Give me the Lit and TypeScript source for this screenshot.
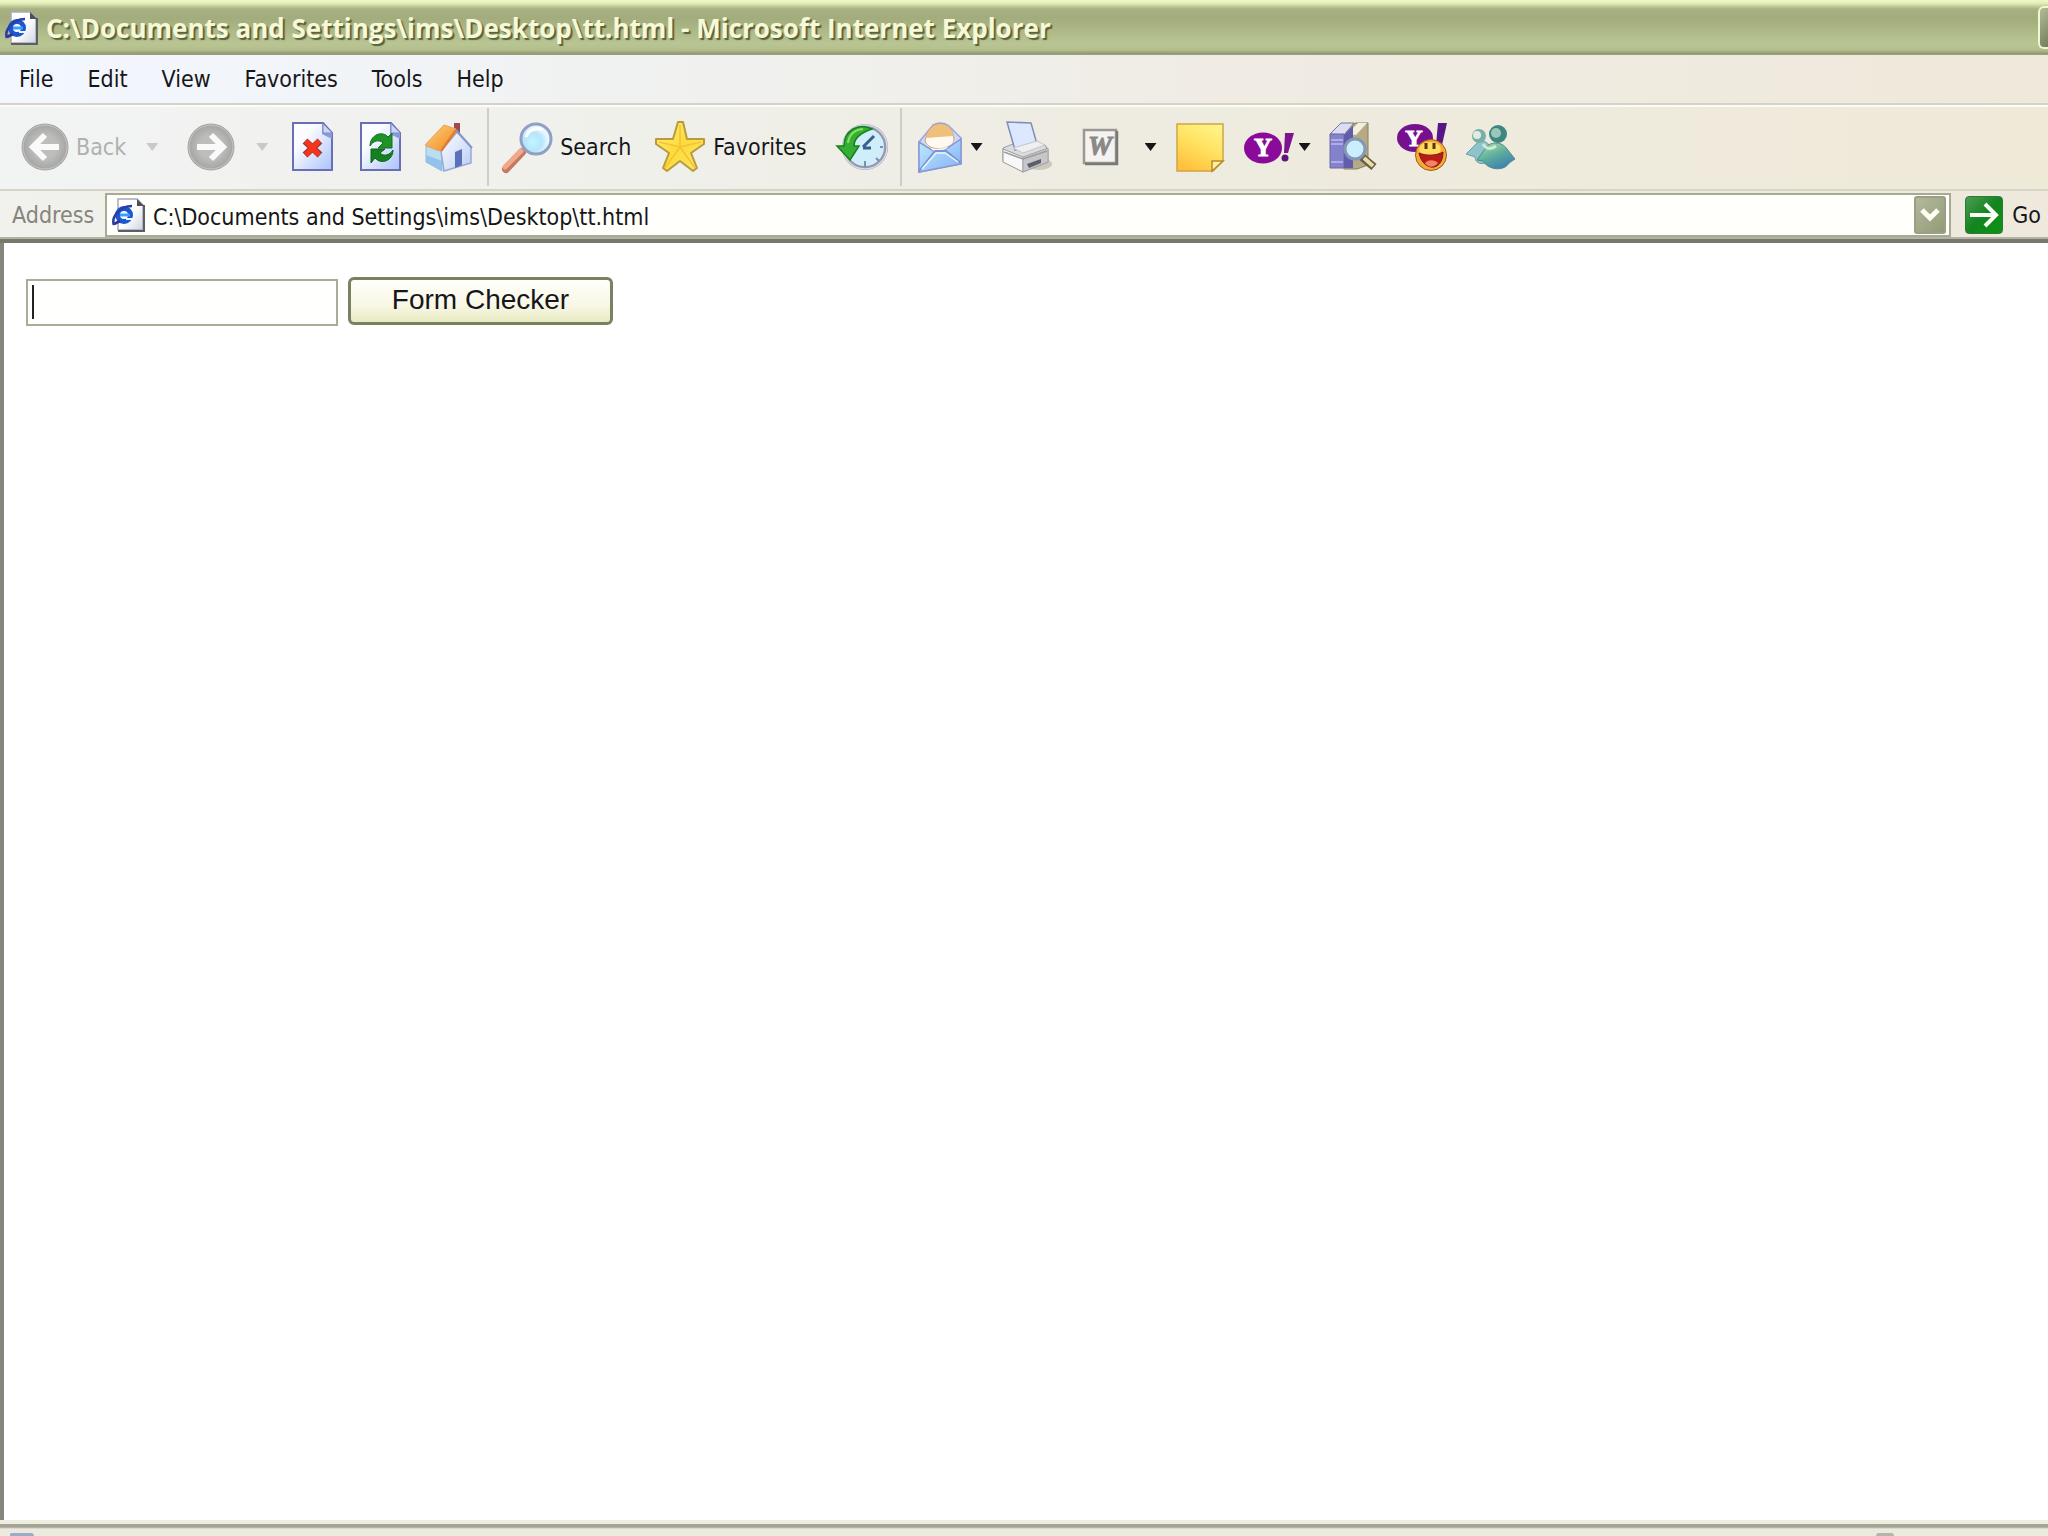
import { LitElement, html, css, svg } from "lit";
import { customElement, property } from "lit/decorators.js";

const pageShape = (id: string) => svg`
  <defs><linearGradient id=${id} x1="0" y1="0" x2="1" y2="1"><stop offset=".3" stop-color="#fbfcff"/><stop offset="1" stop-color="#a9c2fb"/></linearGradient></defs>
  <path d="M5 2H35L44 12V49H5Z" fill="url(#${id})" stroke="#6a6fb4" stroke-width="2"/>
  <path d="M34 2L44 12V18L34 13Z" fill="#8a9bd8"/><path d="M35 3V12H44" fill="#c9d6fa" stroke="#7f8cc8"/>`;

const icons: Record<string, unknown> = {
  back: svg`<defs><radialGradient id="g"><stop offset=".5" stop-color="#bdbdbb"/><stop offset="1" stop-color="#a2a2a0"/></radialGradient></defs>
    <circle cx="25" cy="26" r="23.500" fill="url(#g)"/><circle cx="25" cy="26" r="22" fill="none" stroke="#c6c6c4" stroke-width="1"/>
    <path d="M39 26H14M25 14L13 26L25 38" fill="none" stroke="#fafafa" stroke-width="6"/>`,
  forward: svg`<defs><radialGradient id="g"><stop offset=".5" stop-color="#bdbdbb"/><stop offset="1" stop-color="#a2a2a0"/></radialGradient></defs>
    <circle cx="25" cy="26" r="23.500" fill="url(#g)"/><circle cx="25" cy="26" r="22" fill="none" stroke="#c6c6c4" stroke-width="1"/>
    <path d="M11 26H36M25 14L37 26L25 38" fill="none" stroke="#fafafa" stroke-width="6"/>`,
  stop: svg`${pageShape("p")}<path d="M17 20L32 34M32 20L17 34" stroke="#a03a34" stroke-width="7"/><path d="M18 20L31 34M31 20L18 34" stroke="#f8331a" stroke-width="5"/>`,
  refresh: svg`${pageShape("p")}
    <path d="M14 25C14 14 26 9 32 16L36 12V27H22L27 22C23 18 17 20 14 25Z" fill="#1f9328" stroke="#0e7020"/>
    <path d="M37 29C37 40 25 44 19 37L15 42V28H29L24 32C28 36 34 34 37 29Z" fill="#14801f" stroke="#0b6418"/>`,
  home: svg`<defs><linearGradient id="r" x1="0" y1="0" x2="1" y2="1"><stop stop-color="#ffd079"/><stop offset="1" stop-color="#ef8a22"/></linearGradient>
      <linearGradient id="w" x1="0" y1="0" x2="1" y2="1"><stop stop-color="#fff"/><stop offset="1" stop-color="#b7cdf6"/></linearGradient></defs>
    <path d="M2 25L18 30V50L2 41Z" fill="#b9def0" stroke="#9db6dc"/><path d="M2 34L18 40V50L2 41Z" fill="#93c3ea"/>
    <path d="M17 30L33 11L47 26V42L20 50Z" fill="url(#w)" stroke="#9aa8d2" stroke-width="1.500"/>
    <path d="M30 2H36V13L30 10Z" fill="#a0484a"/>
    <path d="M20 4L32 8L15 30L1 24Z" fill="url(#r)" stroke="#e8a350"/><path d="M32 9L17 30" stroke="#e57b29" stroke-width="2.500"/>
    <path d="M32 9L48 27" stroke="#8796c8" stroke-width="2"/><path d="M31 31L38 28V44L31 47Z" fill="#5a70b8"/>`,
  search: svg`<defs><radialGradient id="l" cx=".4" cy=".6"><stop stop-color="#c2f7ff"/><stop offset=".6" stop-color="#b5e5fb"/><stop offset="1" stop-color="#e8f7ff"/></radialGradient></defs>
    <path d="M20 31L4 48" stroke="#c47a60" stroke-width="8" stroke-linecap="round"/><path d="M19 30L3 46" stroke="#f0a98a" stroke-width="5" stroke-linecap="round"/>
    <circle cx="34" cy="18" r="15" fill="url(#l)" stroke="#8fa0c4" stroke-width="3"/><path d="M24 16C27 8 35 6 40 9" stroke="#fff" stroke-width="3" fill="none"/>`,
  star: svg`<defs><linearGradient id="s" x1="0" y1="0" x2="1" y2="1"><stop stop-color="#fff184"/><stop offset=".5" stop-color="#fddb3b"/><stop offset="1" stop-color="#f8e66c"/></linearGradient></defs>
    <path d="M23 1H28L32 18L49 18V23L36 32L42 47L38 50L25 40L12 50L8 47L14 32L1 23V18L18 18Z" fill="url(#s)" stroke="#b99a3c" stroke-width="2" stroke-linejoin="round"/>
    <path d="M25 4V26L10 47M25 26L46 21M25 26L40 47M25 26L4 21" stroke="#f5c233" stroke-width="1.500" fill="none"/>`,
  history: svg`<circle cx="28" cy="26" r="21" fill="#cfeefa" stroke="#9498b0" stroke-width="4"/><circle cx="28" cy="26" r="22" fill="none" stroke="#d8dae6" stroke-width="1.500"/>
    <path d="M26 26L37 15M26 27H34" stroke="#3b5d92" stroke-width="3"/><path d="M28 40V46M43 26H46M39 37L42 40" stroke="#7b8fb4" stroke-width="2"/>
    <path d="M35 8C21 1 7 10 7 25H0L13 39L22 25H17C17 16 26 11 35 8Z" fill="#35ae31" stroke="#15811f" stroke-width="1.500"/><path d="M11 22C12 14 17 9 26 8" stroke="#8add6a" stroke-width="2" fill="none"/>`,
  mail: svg`<defs><linearGradient id="m" x1="0" y1="0" x2="1" y2="1"><stop stop-color="#bcecff"/><stop offset="1" stop-color="#86b0f3"/></linearGradient></defs>
    <path d="M4 21L18 4C24 1 30 2 34 5L46 17V43L4 51Z" fill="#cfd9f8" stroke="#9aa4d6" stroke-width="1.500"/>
    <path d="M10 20C12 9 18 3 25 3C33 3 38 9 39 18C38 29 14 32 10 20Z" fill="#fffaf0" stroke="#c79a78"/><path d="M11 17C13 8 19 3 25 3C33 3 37 9 38 15Z" fill="#efbf7c"/>
    <path d="M4 21L20 31L31 28L46 18V43L4 51Z" fill="url(#m)" stroke="#8a96d4" stroke-width="1.500"/>
    <path d="M10 22C14 31 36 29 39 19L31 28L20 31Z" fill="#fffaf0"/>
    <path d="M4 50L20 30H31L46 42" fill="none" stroke="#7f92d3" stroke-width="2"/><path d="M7 48L21 32H30L43 41" fill="none" stroke="#e4f8ff" stroke-width="1.500"/>`,
  print: svg`<ellipse cx="38" cy="43" rx="13" ry="6" fill="#ccc8be"/><path d="M2 27L17 21L44 24L47 29V41L22 51L2 40Z" fill="#dcdcdc" stroke="#9a9a9c"/>
    <path d="M6 1L30 2L36 23L14 29Z" fill="#dbe8ff" stroke="#7f90b6" stroke-width="1.500"/><path d="M12 27L36 20L44 24L22 32Z" fill="#eeeff2" stroke="#c4c4c6"/>
    <path d="M2 28L22 36V51L2 41Z" fill="#f8f8f8" stroke="#9a9a9c"/><path d="M22 36L47 27V41L22 51Z" fill="#c6c7ca" stroke="#a4a4a8"/>
    <path d="M26 43L40 38V42L28 47Z" fill="#5d5f68"/><path d="M3 31L22 38L46 30" stroke="#9d9da0" fill="none" stroke-width="1.500"/>`,
  word: svg`<rect x="9" y="9" width="32" height="33" fill="#f4f3ef" stroke="#9a9893" stroke-width="2.500"/><path d="M10 43H42V10" stroke="#7b7975" stroke-width="2.500" fill="none"/>
    <text x="25" y="34" text-anchor="middle" font-family="Liberation Serif, serif" font-weight="bold" font-style="italic" font-size="27" fill="#8a8987" stroke="#8a8987">W</text>`,
  note: svg`<defs><linearGradient id="n" x1=".8" y1="0" x2=".3" y2="1"><stop stop-color="#fff489"/><stop offset=".5" stop-color="#ffe15f"/><stop offset="1" stop-color="#ffc03d"/></linearGradient></defs>
    <path d="M2 3H48V40L38 50H2Z" fill="url(#n)" stroke="#cfa545" stroke-width="1.500"/><path d="M37 50V40H48Z" fill="#fff2a0" stroke="#b98b2c" stroke-width="1.500"/>`,
  yahoo: svg`<ellipse cx="20" cy="27" rx="19" ry="15.500" fill="#8a0b9a"/><text x="20" y="35" text-anchor="middle" font-family="Liberation Serif, serif" font-weight="bold" font-size="25" fill="#fff" stroke="#fff">Y</text>
    <path d="M42 12H51L45 32H41Z" fill="#7d1391"/><circle cx="42" cy="37" r="3.500" fill="#5d1778"/>`,
  books: svg`<path d="M1 13L12 2H25L15 14Z" fill="#dcdcf2" stroke="#76769a"/><path d="M15 14L26 2H39V44L28 48H15Z" fill="#b5aa83" stroke="#85805e"/><path d="M18 13L29 2H38L27 14Z" fill="#f3efdc"/>
    <path d="M1 13H15V47H1Z" fill="#8582cc" stroke="#6b68a5"/><path d="M2 19H14M2 23H14M2 41H14" stroke="#aeabe8" stroke-width="2"/><path d="M15 14L24 5V47H15Z" fill="#615cae"/>
    <path d="M33 36L45 46" stroke="#675e45" stroke-width="8"/><path d="M35 37L44 45" stroke="#eadca8" stroke-width="4"/>
    <circle cx="26" cy="28" r="10" fill="#cbeefc" stroke="#8497b5" stroke-width="3"/>`,
  messenger: svg`<ellipse cx="18" cy="17" rx="18" ry="14" fill="#76108f"/><text x="17" y="25" text-anchor="middle" font-family="Liberation Serif, serif" font-weight="bold" font-size="24" fill="#fff" stroke="#fff">Y</text>
    <path d="M41 2H50L45 24H39Z" fill="#571585"/><circle cx="34" cy="34" r="15.500" fill="#f9a936" stroke="#a4581c"/><ellipse cx="33" cy="28" rx="11" ry="7" fill="#ffdb60"/>
    <path d="M29 22V28M37 22V28" stroke="#59350e" stroke-width="3"/><path d="M22 32C29 35 39 35 46 31C46 51 26 51 22 32Z" fill="#ba1d17" stroke="#742010"/><path d="M28 42C32 38 38 39 41 42C37 47 31 47 28 42Z" fill="#f68268"/>`,
  people: svg`<defs><linearGradient id="a" x1=".2" y1="0" x2=".8" y2="1"><stop stop-color="#a5dba6"/><stop offset=".5" stop-color="#5aaa9c"/><stop offset="1" stop-color="#3c77ba"/></linearGradient></defs>
    <path d="M1 33L11 23C14 19 21 19 24 24L25 41C18 44 10 43 10 36Z" fill="#8fc3cc" stroke="#6ba3aa"/><circle cx="14" cy="15" r="7" fill="#7aaca8"/><circle cx="12" cy="14" r="4" fill="#deede2"/>
    <path d="M12 39L20 28C24 20 37 20 42 28L50 38L44 42C40 50 24 50 18 40Z" fill="url(#a)" stroke="#4c8c91"/><circle cx="33" cy="13" r="9" fill="#3f8581"/><circle cx="31" cy="12" r="5" fill="#98c8b8"/>
    <path d="M18 23C21 28 26 29 31 25" stroke="#cdebd2" stroke-width="3" fill="none"/>`,
};

@customElement("tool-icon")
class ToolIcon extends LitElement {
  @property() name = "stop";
  static styles = css`:host { display: block; flex: none; } svg { display: block; width: 50px; height: 52px; overflow: visible; }`;
  render() { return html`<svg viewBox="0 0 50 52" aria-hidden="true">${icons[this.name]}</svg>`; }
}

@customElement("page-icon")
class PageIcon extends LitElement {
  static styles = css`:host { display: block; flex: none; } svg { display: block; width: 34px; height: 34px; }`;
  render() {
    return html`<svg viewBox="0 0 34 34" aria-hidden="true">
      <defs><linearGradient id="d" x1="0" y1="0" x2="1" y2="1"><stop offset=".5" stop-color="#fff"/><stop offset="1" stop-color="#cdd4e2"/></linearGradient></defs>
      <path d="M7 1H26L32 7V32H7Z" fill="url(#d)" stroke="#a7abb2" stroke-width="1.500"/><path d="M33 7V33H7" fill="none" stroke="#5c5f68" stroke-width="2"/><path d="M26 1V8H33Z" fill="#4c4f57"/>
      <circle cx="13" cy="17" r="6.500" fill="none" stroke="#1c57d0" stroke-width="5"/><path d="M9 17H19" stroke="#39a0ff" stroke-width="3"/><path d="M15 21H22" stroke="#f4f6fb" stroke-width="2"/>
      <path d="M3 27C0 20 8 8 21 8" fill="none" stroke="#2a3fa6" stroke-width="2.500"/><path d="M3 26L9 23" stroke="#35309a" stroke-width="3"/></svg>`;
  }
}

@customElement("app-root")
class AppRoot extends LitElement {
  static styles = css`
    :host { display: flex; flex-direction: column; min-height: 100vh; overflow: hidden; background: #fff; color: #16161a;
      font: 23px/28px "DejaVu Sans Condensed", "DejaVu Sans", sans-serif; font-stretch: condensed; }
    * { box-sizing: border-box; }
    button, input { font: inherit; color: inherit; border: 0; padding: 0; margin: 0; background: none; border-radius: 0; outline: 0; white-space: nowrap; }
    .title { display: flex; align-items: center; justify-content: space-between; height: 55px; padding-left: 4px;
      background: linear-gradient(#eef8c8 0, #e4efb9 3px, #a7b181 9px, #a2ac7c 18px, #aeba87 32px, #b9c593 44px, #b3be8c 50px, #8e9670 54px, #a3a98c); }
    .name { display: flex; align-items: center; gap: 8px; }
    h1 { margin: 0; font: bold 26px/34px "Open Sans", sans-serif; color: #f6f8d6; text-shadow: 2px 2px 1px #59613f; white-space: nowrap; }
    .winbtn { width: 10px; height: 43px; border: 2px solid #eff6d2; border-right: 0; border-radius: 6px 0 0 6px; background: linear-gradient(135deg, #b1bb98, #747f5c); }
    .menu { display: flex; align-items: center; gap: 34px; height: 50px; padding: 0 19px; border-bottom: 2px solid #d5d3c9;
      background: linear-gradient(90deg, #f3f7ff, #f0f2f1 30%, #f0ebe2 65%, #efe9db); }
    .tools { display: flex; align-items: center; height: 86px; padding: 0 0 2px 20px; border-top: 2px solid #fbfbf7; border-bottom: 2px solid #d5d4c5;
      background: linear-gradient(90deg, #f2f4f4, #f0f0eb 30%, #eeebdf 60%, #efe9d8); }
    .group { display: flex; align-items: center; gap: 18px; }
    .tool { display: flex; align-items: center; gap: 8px; }
    .tool.far { gap: 20px; }
    .tool.near { gap: 6px; }
    .tool.inset { padding-left: 6px; }
    .tool:disabled { color: #b0b0ae; }
    .tool:disabled .arrow { background: #c9c9c5; }
    .pair { display: flex; align-items: center; gap: 6px; }
    .history { gap: 28px; margin-right: 20px; }
    .find { gap: 24px; }
    .rule { width: 2px; height: 78px; margin: 0 13px; background: #cfcdc4; }
    .arrow { width: 12px; height: 8px; background: currentColor; clip-path: polygon(0 0, 100% 0, 50% 100%); }
    .address { display: flex; align-items: center; height: 52px; padding-right: 7px; border-bottom: 4px solid #77786c; box-shadow: inset 0 -2px #b3b3a5;
      background: linear-gradient(90deg, #f1f1ed, #eeede4 30%, #eee9dc); }
    .address label { width: 105px; padding-left: 12px; color: #85857c; }
    .combo { flex: 1; display: flex; align-items: center; gap: 8px; height: 44px; padding: 0 3px 0 4px; border: 2px solid #a9aa93; background: #fffffb; }
    .combo input { flex: 1; min-width: 0; padding-top: 3px; }
    .drop, .goicon { display: grid; place-items: center; }
    .drop { width: 32px; height: 38px; border: 2px solid #9a9f87; border-radius: 3px; background: linear-gradient(135deg, #b3b99c, #929b77); }
    .drop svg, .goicon svg { display: block; }
    .go { display: flex; align-items: center; gap: 9px; margin-left: 14px; }
    .goicon { width: 38px; height: 38px; border-radius: 4px; background: linear-gradient(135deg, #4d9c54, #148420 50%, #0c9314); border: 1px solid #2c7a35; }
    main { flex: 1; border-left: 4px solid #85867b; background: #fff; }
    form { display: flex; align-items: flex-start; gap: 10px; padding: 34px 22px; }
    .field { width: 312px; height: 47px; margin-top: 2px; padding: 4px 10px; border: 2px solid #a9ad98; background: linear-gradient(#222, #222) 4px 4px / 2px 34px no-repeat #fffffd; font: 28px/34px "Liberation Sans", sans-serif; }
    .submit { width: 265px; height: 48px; padding-bottom: 2px; border: 3px solid #7b8063; border-radius: 6px; background: linear-gradient(#fffffb, #f8f7e6 60%, #e9ebc1); font: 28px/34px "Liberation Sans", sans-serif; }
    .status { display: flex; justify-content: space-between; align-items: flex-end; height: 16px; padding: 0 154px 0 10px; border-top: 4px solid #eeeee0;
      background: linear-gradient(#a3a495 0 3px, #eceade 5px); }
    .bit { width: 24px; height: 3px; border-radius: 3px 6px 0 0; background: #9cabc7; }
    .grip { width: 18px; height: 3px; border-radius: 6px 6px 0 0; background: #b4b4aa; }
  `;

  render() {
    return html`
      <header class="title">
        <div class="name"><page-icon></page-icon><h1>C:\\Documents and Settings\\ims\\Desktop\\tt.html - Microsoft Internet Explorer</h1></div>
        <button class="winbtn" aria-label="Minimize"></button>
      </header>
      <nav class="menu">${["File", "Edit", "View", "Favorites", "Tools", "Help"].map((m) => html`<button>${m}</button>`)}</nav>
      <div class="tools" role="toolbar">
        <div class="group history">
          <button class="tool far" disabled><span class="pair"><tool-icon name="back"></tool-icon>Back</span><span class="arrow"></span></button>
          <button class="tool far" disabled aria-label="Forward"><tool-icon name="forward"></tool-icon><span class="arrow"></span></button>
        </div>
        <div class="group">
          <button class="tool" aria-label="Stop"><tool-icon name="stop"></tool-icon></button>
          <button class="tool" aria-label="Refresh"><tool-icon name="refresh"></tool-icon></button>
          <button class="tool" aria-label="Home"><tool-icon name="home"></tool-icon></button>
        </div>
        <span class="rule"></span>
        <div class="group find">
          <button class="tool"><tool-icon name="search"></tool-icon>Search</button>
          <button class="tool"><tool-icon name="star"></tool-icon>Favorites</button>
          <button class="tool inset" aria-label="History"><tool-icon name="history"></tool-icon></button>
        </div>
        <span class="rule"></span>
        <div class="group">
          <button class="tool near" aria-label="Mail"><tool-icon name="mail"></tool-icon><span class="arrow"></span></button>
          <button class="tool" aria-label="Print"><tool-icon name="print"></tool-icon></button>
          <button class="tool far inset" aria-label="Edit with Word"><tool-icon name="word"></tool-icon><span class="arrow"></span></button>
          <button class="tool" aria-label="Notes"><tool-icon name="note"></tool-icon></button>
          <button class="tool near" aria-label="Yahoo"><tool-icon name="yahoo"></tool-icon><span class="arrow"></span></button>
          <button class="tool" aria-label="Research"><tool-icon name="books"></tool-icon></button>
          <button class="tool" aria-label="Yahoo Messenger"><tool-icon name="messenger"></tool-icon></button>
          <button class="tool" aria-label="Messenger"><tool-icon name="people"></tool-icon></button>
        </div>
      </div>
      <div class="address">
        <label for="url">Address</label>
        <div class="combo">
          <page-icon></page-icon>
          <input id="url" type="text" .value=${"C:\\Documents and Settings\\ims\\Desktop\\tt.html"} />
          <button class="drop" aria-label="Show addresses"><svg width="20" height="14" viewBox="0 0 20 14"><path d="M2 2L10 10L18 2" fill="none" stroke="#fffff4" stroke-width="5"/></svg></button>
        </div>
        <button class="go"><span class="goicon"><svg width="30" height="28" viewBox="0 0 30 28"><path d="M1 14H27M16 3L27 14L16 25" fill="none" stroke="#fbfff8" stroke-width="4"/></svg></span>Go</button>
      </div>
      <main>
        <form @submit=${(e: Event) => e.preventDefault()}>
          <input class="field" type="text" aria-label="Value" />
          <button class="submit">Form Checker</button>
        </form>
      </main>
      <footer class="status"><span class="bit"></span><span class="grip"></span></footer>
    `;
  }
}
